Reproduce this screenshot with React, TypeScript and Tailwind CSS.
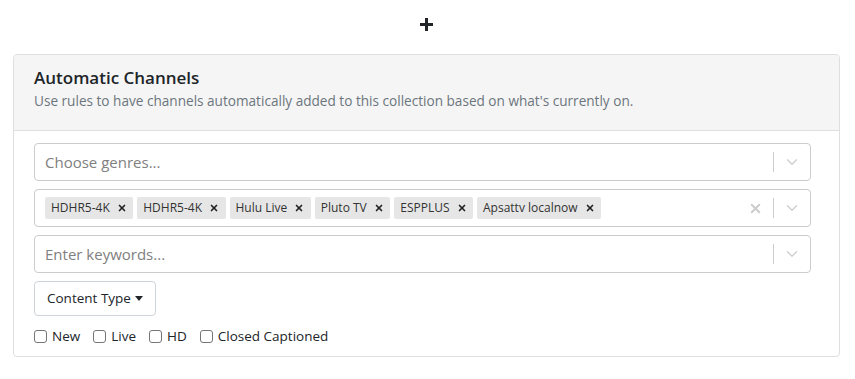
import { ChevronDown, X } from "lucide-react";

const tags = ["HDHR5-4K", "HDHR5-4K", "Hulu Live", "Pluto TV", "ESPPLUS", "Apsattv localnow"];

export default function App() {
  return (
    <div className="bg-white text-[#212529] font-['Open_Sans',sans-serif] px-[13px] pt-[13px] pb-6 min-h-[379px]">
      <div className="flex justify-center h-[22px] items-center w-[827px]">
        <svg width="13" height="13" viewBox="0 0 13 13" className="text-[#212529]">
          <rect x="5" y="0" width="3" height="13" fill="currentColor" />
          <rect x="0" y="5" width="13" height="3" fill="currentColor" />
        </svg>
      </div>
      <section className="mt-[19px] border border-[#dfdfdf] rounded-[4px] w-[827px]">
        <header className="bg-[#f5f5f5] border-b border-[#dfdfdf] px-5 pt-[11px] pb-[19px] rounded-t-[4px]">
          <h2 className="text-[17px] font-semibold leading-6">Automatic Channels</h2>
          <p className="text-[13.6px] text-[#6c757d] leading-5 mt-px">
            Use rules to have channels automatically added to this collection based on what's currently on.
          </p>
        </header>
        <div className="pl-5 pt-3 pb-[10px] flex flex-col gap-2">
          <SelectBox placeholder="Choose genres..." />
          <SelectBox tags={tags} clearable />
          <SelectBox placeholder="Enter keywords..." />
          <div>
            <button className="h-[35px] px-3 border border-[#ced4da] rounded-[4px] text-[13.5px] text-[#212529] flex items-center gap-1">
              Content Type
              <svg width="8" height="5" viewBox="0 0 8 5">
                <path d="M0 0h8L4 5z" fill="#212529" />
              </svg>
            </button>
          </div>
          <div className="flex items-center gap-[13px] text-[13.5px] mt-[2px]">
            {["New", "Live", "HD", "Closed Captioned"].map((l) => (
              <label key={l} className="flex items-center gap-[5px]">
                <span className="w-[13px] h-[13px] border border-[#767676] rounded-[3px] bg-white" />
                {l}
              </label>
            ))}
          </div>
        </div>
      </section>
    </div>
  );
}

function SelectBox({ placeholder, tags, clearable }: { placeholder?: string; tags?: string[]; clearable?: boolean }) {
  return (
    <div className="w-[777px] h-[38px] border border-[#cccccc] rounded-[4px] flex items-center">
      <div className="flex-1 flex items-center gap-1 pl-[10px]">
        {tags ? (
          tags.map((t, i) => (
            <span key={i} className="bg-[#e6e6e6] rounded-[2px] h-[22px] flex items-center pl-[6px] pr-[6.5px] text-[12px] text-[#333]">
              {t}
              <X size={10} strokeWidth={4} className="ml-[7px] text-[#222]" />
            </span>
          ))
        ) : (
          <span className="text-[15px] text-[#808080]">{placeholder}</span>
        )}
      </div>
      {clearable && <X size={15} strokeWidth={3.2} className="text-[#cccccc] mr-[10px]" />}
      <span className="w-px h-5 bg-[#cccccc]" />
      <div className="w-[36px] flex justify-center">
        <ChevronDown size={18} strokeWidth={1.6} className="text-[#cccccc]" />
      </div>
    </div>
  );
}
